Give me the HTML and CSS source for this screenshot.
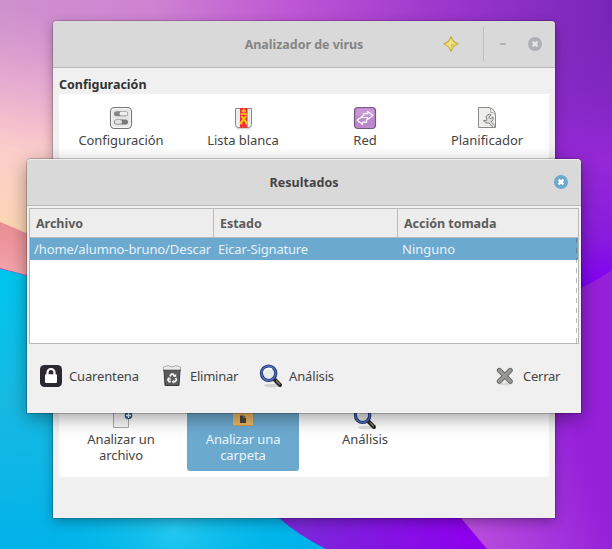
FILE: index.html
```html
<!DOCTYPE html>
<html lang="es">
<head>
<meta charset="utf-8">
<title>Analizador de virus</title>
<link rel="stylesheet" href="styles.css">
</head>
<body>
<svg class="wallpaper" viewBox="0 0 612 549" aria-hidden="true">
  <defs>
    <linearGradient id="top" x1="0" y1="0" x2="612" y2="0" gradientUnits="userSpaceOnUse">
      <stop offset="0" stop-color="#cf91cd"/><stop offset=".25" stop-color="#ce82d2"/><stop offset=".48" stop-color="#bd55d4"/><stop offset=".72" stop-color="#9c37cc"/><stop offset="1" stop-color="#7725b9"/>
    </linearGradient>
    <linearGradient id="peach" x1="30" y1="10" x2="-10" y2="240" gradientUnits="userSpaceOnUse">
      <stop offset="0" stop-color="#dca0ce" stop-opacity="0"/><stop offset=".3" stop-color="#e5a9d0"/><stop offset=".6" stop-color="#fbcdcb"/><stop offset="1" stop-color="#fdd8b0"/>
    </linearGradient>
    <linearGradient id="right" x1="0" y1="22" x2="0" y2="300" gradientUnits="userSpaceOnUse">
      <stop offset="0" stop-color="#8228c0" stop-opacity="0"/><stop offset=".5" stop-color="#9528d6"/><stop offset=".78" stop-color="#881bdd"/><stop offset=".95" stop-color="#8200f4"/>
    </linearGradient>
    <linearGradient id="cyan" x1="30" y1="270" x2="70" y2="549" gradientUnits="userSpaceOnUse">
      <stop offset="0" stop-color="#00c6ed"/><stop offset=".45" stop-color="#18b9e2"/><stop offset="1" stop-color="#00b2ea"/>
    </linearGradient>
    <radialGradient id="glow" cx="175" cy="528" r="125" gradientUnits="userSpaceOnUse">
      <stop offset="0" stop-color="#24c8f0"/><stop offset="1" stop-color="#00b9e3" stop-opacity="0"/>
    </radialGradient>
    <linearGradient id="violet" x1="300" y1="0" x2="470" y2="0" gradientUnits="userSpaceOnUse">
      <stop offset="0" stop-color="#7b27d8"/><stop offset="1" stop-color="#8d00ed"/>
    </linearGradient>
    <linearGradient id="orchid" x1="475" y1="540" x2="600" y2="500" gradientUnits="userSpaceOnUse">
      <stop offset="0" stop-color="#b84cdd"/><stop offset=".6" stop-color="#a333dc"/><stop offset="1" stop-color="#9420d8"/>
    </linearGradient>
    <linearGradient id="coral" x1="0" y1="222" x2="0" y2="275" gradientUnits="userSpaceOnUse">
      <stop offset="0" stop-color="#e98c93"/><stop offset="1" stop-color="#f3a5aa"/>
    </linearGradient>
  </defs>
  <path fill="url(#top)" d="M0 0H612V549H0Z"/>
  <path fill="url(#peach)" d="M0 0H60V300H0Z"/>
  <path fill="url(#right)" d="M540 0H612V300H540Z"/>
  <path fill="url(#coral)" d="M0 222Q20 230 60 248V300H0Z"/>
  <path fill="url(#orchid)" d="M400 400L581 288Q598 280 612 270V549H400Z"/>
  <path fill="url(#violet)" d="M200 420H380Q430 470 461 518L487 549H200Z"/>
  <path fill="#a253d0" d="M0 268L60 284V300H0Z"/>
  <path fill="url(#cyan)" d="M0 269Q30 275 60 290C170 340 220 460 279 518Q298 535 326 549H0Z"/>
  <path fill="url(#glow)" d="M50 400H210Q240 480 279 518Q298 535 326 549H50Z"/>
</svg>

<svg class="symbols" aria-hidden="true">
  <symbol id="magnifier" viewBox="0 0 24 24">
    <ellipse cx="13" cy="21.5" rx="8" ry="1.7" fill="#000" opacity=".12"/>
    <path d="M14.5 14.5L21 21" stroke="#292622" stroke-width="4" stroke-linecap="round"/>
    <path d="M17 16.5L21 20.5" stroke="#8b8173" stroke-width="1.3"/>
    <circle cx="9.6" cy="9.3" r="7.2" fill="#e7e9ea" stroke="#22366b" stroke-width="3.2"/>
    <circle cx="9.6" cy="9.3" r="7.2" fill="none" stroke="#4b6fc4" stroke-width="1.5"/>
    <path d="M5 9a5 5 0 0 1 8-3.5" fill="none" stroke="#fff" stroke-width="2"/>
  </symbol>
</svg>

<main class="window scanner">
  <header class="titlebar">
    <h1>Analizador de virus</h1>
    <div class="controls">
      <svg class="star" viewBox="0 0 18 18"><path d="M9 1.5Q10.4 7.2 16.5 9Q10.6 10.8 9 16.5Q7.4 10.8 1.5 9Q7.6 7.2 9 1.5Z" fill="#eee18a" stroke="#cbb03c" stroke-width="1.1" stroke-linejoin="round"/><path d="M9 9L14 9.2Q10 10.6 9 14Z" fill="#d9c44e"/></svg>
      <span class="divider"></span>
      <span class="minimize"></span>
      <svg class="close" viewBox="0 0 14 14"><circle cx="7" cy="7" r="7" fill="#afb0b6"/><path d="M4.6 4.6L9.4 9.4M9.4 4.6L4.6 9.4" stroke="#e4e4e6" stroke-width="2.4"/></svg>
    </div>
  </header>
  <h2>Configuración</h2>
  <section class="panel">
    <div class="tiles">
      <div class="tile">
        <svg viewBox="0 0 24 24"><rect x="1.5" y="1.5" width="21" height="21" rx="4" fill="#e5e5e5" stroke="#777" stroke-width="1.1"/><rect x="2.7" y="2.7" width="18.6" height="18.6" rx="3" fill="none" stroke="#f8f8f8"/><rect x="5" y="5.2" width="14" height="5" rx="2.5" fill="#858585"/><rect x="10.5" y="5.8" width="8" height="3.8" rx="1.9" fill="#f0f0f0"/><rect x="5" y="13.4" width="14" height="5" rx="2.5" fill="#777"/><rect x="5.6" y="14" width="7.5" height="3.8" rx="1.9" fill="#e3e3e3"/></svg>
        <span class="label-long">Configuración</span>
      </div>
      <div class="tile">
        <svg viewBox="0 0 24 24"><path d="M6 22.3h13" stroke="#000" stroke-width="2" opacity=".16"/><path d="M4.5 2.5H20.5V18.5Q20.5 21.5 17.5 21.5H7.5Q4.5 21.5 4.5 18.5Z" fill="#eee" stroke="#888"/><path d="M9 2h7.5v19.7H9Z" fill="#f22e32"/><path d="M12.7 2.5v5M10.5 5h4.5M9.5 8h6.5" stroke="#f5d313" stroke-width="1.4"/><path d="M10 10.5Q11.5 10.5 12.7 13.5Q14 10.5 15.5 10.5M10.3 18.5Q10 15 12.7 13.5Q15.5 15 15.2 18.5M8.5 16.5h2.5M14.5 16.5h2.5" fill="none" stroke="#f3cc10" stroke-width="1.9"/></svg>
        <span>Lista blanca</span>
      </div>
      <div class="tile">
        <svg viewBox="0 0 24 24"><rect x="1.5" y="1.5" width="21" height="21" rx="3.5" fill="#be88ce" stroke="#755880" stroke-width="1.2"/><path d="M3 4.5Q3 2.7 5 2.7H19Q21 2.7 21 4.5V10H3Z" fill="#cca0da" opacity=".65"/><path d="M14.5 7.6V5.5L20 9.5 14.5 13.5V11.5H10.5M10.5 7.6H14.5M9.5 16.2V18.3L4 14.3 9.5 10.3V12.3M9.5 16.2H13.5V13.5M10.5 7.6V10" fill="none" stroke="#fff" stroke-width="1.2" stroke-linejoin="round"/></svg>
        <span>Red</span>
      </div>
      <div class="tile">
        <svg viewBox="0 0 24 24"><path d="M3.5 1.5H14Q20.5 3 20.5 10V21.5H3.5Z" fill="#eeeeed" stroke="#898b88" stroke-linejoin="round"/><path d="M15 2Q16.5 5 15.5 6.5Q18 6 20 8" fill="#fafafa" stroke="#aaa"/><path d="M12 11.5a4 4 0 0 1 5-2.3l-2.2 2.5 1.5 1.7 2.6-2a4 4 0 0 1-1.7 5l4.5 4.3-2.3 1.7-4.5-5a4 4 0 0 1-5.2-2.5l2.5.4.6-1.5Z" transform="translate(-1 -.5)" fill="#ddd" stroke="#757774" stroke-width=".9"/></svg>
        <span>Planificador</span>
      </div>
    </div>
    <div class="tiles targets">
      <div class="tile">
        <svg viewBox="0 0 24 24"><path d="M4.5 1.5H19.5V21.5H4.5Z" fill="#f8f8f8" stroke="#aaa"/><circle cx="19.5" cy="9.5" r="3.8" fill="#305998"/><path d="M19.5 7v5M17 9.5h5" stroke="#fff" stroke-width="1.3"/></svg>
        <span class="label-wrap">Analizar un<br>archivo</span>
      </div>
      <div class="tile selected">
        <svg viewBox="0 0 24 24"><path d="M2 3h7l2 2h11V19.5H2Z" fill="#e9b663"/><path d="M2 19.5h20" stroke="#cc994c"/><path d="M9 9.5h3.5v2.5H15v5H9Z" fill="#514637"/><path d="M13 9.5L15 11.5H13Z" fill="#514637"/></svg>
        <span class="label-wrap">Analizar una<br>carpeta</span>
      </div>
      <div class="tile">
        <svg><use href="#magnifier"/></svg>
        <span>Análisis</span>
      </div>
    </div>
  </section>
</main>

<section class="window results">
  <header class="titlebar">
    <h1>Resultados</h1>
    <div class="controls">
      <svg class="close" viewBox="0 0 14 14"><circle cx="7" cy="7" r="7" fill="#6ca9cf"/><path d="M4.6 4.6L9.4 9.4M9.4 4.6L4.6 9.4" stroke="#fff" stroke-width="2.4"/></svg>
    </div>
  </header>
  <div class="table">
    <div class="row head"><span>Archivo</span><span>Estado</span><span>Acción tomada</span></div>
    <div class="row item"><span class="path">/home/alumno-bruno/Descar</span><span class="state">Eicar-Signature</span><span>Ninguno</span></div>
    <i class="overflow-mark"></i>
  </div>
  <footer>
    <div class="action quarantine">
      <svg viewBox="0 0 24 24"><rect x="1" y="1" width="22" height="22" rx="4.5" fill="#2c2832"/><path d="M8.5 11V8.5a3.5 3.5 0 0 1 7 0V11" fill="none" stroke="#fff" stroke-width="2.2"/><rect x="6" y="10.3" width="12" height="8.7" rx="1" fill="#fff"/></svg>
      <span>Cuarentena</span>
    </div>
    <div class="action remove">
      <svg viewBox="0 0 24 24"><path d="M4 6L5 21.5H19L20 6Z" fill="#5b5b5b" stroke="#3c3c3c"/><path d="M3.5 3L8 1.7 12 3 16 1.7 20.5 3V6H3.5Z" fill="#eee" stroke="#969696" stroke-width=".8"/><path d="M3 6.5H21" stroke="#555" stroke-width="1.3"/><path d="M10 12.5L11.3 10.2h1.8L14.7 12.5M15.6 14l.9 1.8-1.5 1.9H13.3M10.8 17.7H9L7.8 15.8 9 14" fill="none" stroke="#f3f3f3" stroke-width="1.7"/><path d="M13.2 12.8h3v-3ZM13.7 15.7v4l-2-2ZM7.5 13.7h3v3Z" fill="#f3f3f3"/></svg>
      <span>Eliminar</span>
    </div>
    <div class="action analyze">
      <svg><use href="#magnifier"/></svg>
      <span>Análisis</span>
    </div>
    <div class="action dismiss">
      <svg viewBox="0 0 24 24"><ellipse cx="12.5" cy="19.8" rx="8" ry="1.5" fill="#000" opacity=".1"/><path d="M6.3 6.3L17.3 17.3M17.3 6.3L6.3 17.3" stroke="#696b67" stroke-width="5" stroke-linecap="round"/><path d="M6.3 6.3L17.3 17.3M17.3 6.3L6.3 17.3" stroke="#999a97" stroke-width="3" stroke-linecap="round"/></svg>
      <span>Cerrar</span>
    </div>
  </footer>
</section>
</body>
</html>
```
FILE: styles.css
```css
* { box-sizing: border-box; }
body {
  margin: 0;
  width: 612px;
  height: 549px;
  overflow: hidden;
  position: relative;
  font: 13px/16px "Noto Sans", "Open Sans", sans-serif;
  color: #444;
}
svg { display: block; flex: none; }
h1, h2 { margin: 0; font-size: 12.5px; font-weight: 700; white-space: nowrap; }
.wallpaper { width: 612px; height: 549px; }
.symbols { position: absolute; width: 0; height: 0; }

.window {
  position: absolute;
  display: flex;
  flex-direction: column;
  background: #f0f0f0;
  border-radius: 4px 4px 0 0;
}
.scanner {
  left: 53px; top: 21px;
  width: 502px; height: 497px;
  box-shadow: 0 0 0 1px rgba(0,0,0,.16), 0 4px 12px rgba(0,0,0,.3);
}
.results {
  left: 27px; top: 159px;
  width: 554px; height: 254px;
  box-shadow: 0 0 0 1px rgba(0,0,0,.2), 0 5px 18px rgba(0,0,0,.38);
}
.titlebar {
  position: relative;
  display: flex;
  align-items: center;
  justify-content: center;
  height: 47px;
  flex: none;
  background: #d9d9d9;
  border-bottom: 1px solid #b9b9b9;
  border-radius: 4px 4px 0 0;
}
.results .titlebar { border-top: 1px solid #eee; }
.scanner h1 { color: #858585; padding-top: 2px; letter-spacing: -.04px; }
.results h1 { color: #444; letter-spacing: .05px; }
.controls {
  position: absolute;
  right: 13px; top: 0;
  height: 100%;
  display: flex;
  align-items: center;
}
.results .controls { top: -1px; }
.close { width: 14px; height: 14px; }
.star { width: 18px; height: 18px; margin-right: 23px; }
.divider { width: 1px; height: 34px; background: #bebebe; margin-right: 16px; }
.minimize { width: 6px; height: 2px; background: #b2b2b5; margin-right: 22px; }

.scanner h2 { height: 26px; padding: 9px 0 0 6px; color: #333; letter-spacing: 0; }
.panel {
  height: 383px;
  margin: 0 6px;
  padding: 6px;
  background: #fff;
  display: flex;
  flex-direction: column;
  justify-content: space-between;
}
.tiles { display: grid; grid-template-columns: repeat(4, 112px); gap: 10px; }
.tile {
  display: flex;
  flex-direction: column;
  align-items: center;
  gap: 2px;
  padding: 6px 0 7px;
  text-align: center;
  border-radius: 3px;
  white-space: nowrap;
}
.tile svg { width: 24px; height: 24px; }
.tile span { letter-spacing: -.03px; }
.tile .label-long { letter-spacing: -.05px; }
.tile .label-wrap { letter-spacing: -.1px; }
.targets .tile { gap: 1px; padding-bottom: 8px; }
.tile.selected { background: #6ca9cf; color: #eaf4fa; }

.table {
  position: relative;
  margin: 2px 2px 0;
  height: 136px;
  background: #fff;
  border: 1px solid #b9b9b9;
  overflow: hidden;
}
.row { display: grid; grid-template-columns: 184px 184px 1fr; align-items: center; }
.row span { white-space: nowrap; overflow: hidden; }
.head { height: 29px; background: #ededed; border-bottom: 1px solid #b9b9b9; font-size: 12.5px; font-weight: 700; color: #5c5c5c; letter-spacing: -.03px; }
.head span { padding: 6px 0 0 6px; height: 28px; line-height: 18px; border-right: 1px solid #b9b9b9; }
.head span:last-child { border: 0; }
.item { height: 22px; background: #6ca9cf; color: #e6f2f9; }
.item span { padding-left: 4px; }
.item .path { letter-spacing: -.12px; }
.item .state { letter-spacing: -.18px; }
.overflow-mark {
  position: absolute;
  top: 29px; right: 1px; bottom: 0;
  width: 1px;
  background: repeating-linear-gradient(rgba(70,70,70,.35) 0 5px, transparent 5px 10px);
}
footer { display: flex; align-items: center; height: 24px; margin: 20px 21px 0 12px; }
.action { display: flex; align-items: center; gap: 6px; }
.action svg { width: 24px; height: 24px; }
.action span { white-space: nowrap; letter-spacing: -.15px; }
.quarantine { width: 121px; }
.remove { width: 99px; }
.remove span { letter-spacing: -.25px; }
.dismiss { margin-left: auto; }
.dismiss span { letter-spacing: -.3px; }
```
